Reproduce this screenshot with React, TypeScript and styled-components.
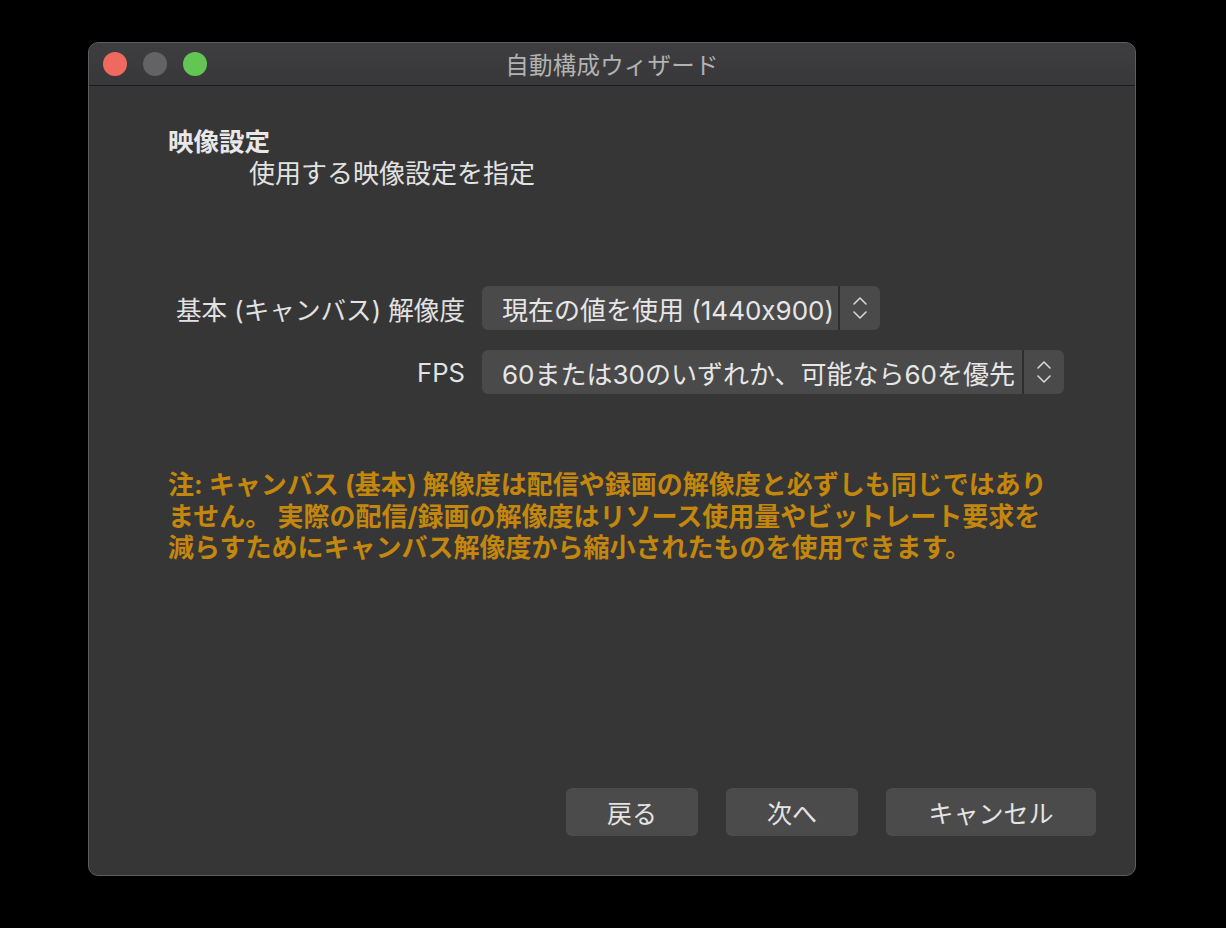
import React from "react";
import styled, { createGlobalStyle } from "styled-components";

const GlobalStyle = createGlobalStyle`
  html, body { margin: 0; padding: 0; background: #000; }
  body { font-family: Inter, "Noto Sans CJK JP", sans-serif; }
`;

const Page = styled.div`
  width: 1226px;
  height: 928px;
  box-sizing: border-box;
  padding: 42px 0 0 88px;
  background: #000;
  overflow: hidden;
`;

const Window = styled.div`
  width: 1048px;
  height: 834px;
  box-sizing: border-box;
  border: 1px solid #5d5d5f;
  border-radius: 10px;
  background: #363636;
  display: flex;
  flex-direction: column;
  overflow: hidden;
`;

const TitleBar = styled.div`
  height: 42px;
  flex: none;
  display: grid;
  grid-template-columns: 1fr auto 1fr;
  align-items: center;
  background: linear-gradient(#3e3e40, #38383a);
  border-bottom: 1px solid #1b1b1b;
`;

const Lights = styled.div`
  display: flex;
  gap: 16px;
  padding-left: 14px;
`;

const Light = styled.span<{ $color: string }>`
  width: 24px;
  height: 24px;
  border-radius: 50%;
  background: ${(p) => p.$color};
`;

const Title = styled.div`
  font-family: "Noto Sans CJK JP", sans-serif;
  font-size: 23.5px;
  color: #b2b2b2;
  letter-spacing: 0.2px;
`;

const Body = styled.div`
  flex: 1;
  display: flex;
  flex-direction: column;
  padding: 38px 39px 39px 79px;
  color: #dedede;
`;

const Heading = styled.div`
  font-family: "Noto Sans CJK JP", sans-serif;
  font-size: 25.5px;
  font-weight: 700;
  line-height: 32px;
  color: #e8e8e8;
`;

const SubHeading = styled.div`
  font-family: "Noto Sans CJK JP", sans-serif;
  font-size: 26px;
  line-height: 32px;
  padding-left: 81px;
  color: #e2e2e2;
`;

const Form = styled.div`
  margin-top: 98px;
  display: grid;
  grid-template-columns: 297px auto;
  column-gap: 17px;
  row-gap: 20px;
  align-items: center;
  justify-content: start;
`;

const Label = styled.div`
  text-align: right;
  font-family: Inter, "Noto Sans CJK JP", sans-serif;
  font-size: 25.6px;
  color: #e2e2e2;
  white-space: nowrap;
`;

const Select = styled.div<{ $width: number }>`
  width: ${(p) => p.$width}px;
  height: 44px;
  display: flex;
  border-radius: 6px;
  background: #4a4a4a;
  overflow: hidden;
`;

const SelectValue = styled.div`
  flex: 1;
  display: flex;
  align-items: center;
  padding-left: 20px;
  font-family: Inter, "Noto Sans CJK JP", sans-serif;
  font-size: 26px;
  color: #e6e6e6;
  white-space: nowrap;
  overflow: hidden;
  border-right: 2px solid #2e2e2e;
`;

const SelectArrow = styled.div`
  width: 40px;
  flex: none;
  display: flex;
  align-items: center;
  justify-content: center;
`;

const Note = styled.div`
  margin-top: 75px;
  font-family: Inter, "Noto Sans CJK JP", sans-serif;
  font-size: 26px;
  font-weight: 700;
  line-height: 31.5px;
  color: #c4870d;
  white-space: nowrap;
`;

const Buttons = styled.div`
  margin-top: auto;
  display: flex;
  justify-content: flex-end;
  gap: 28px;
`;

const Button = styled.button<{ $width: number }>`
  width: ${(p) => p.$width}px;
  height: 48px;
  border: none;
  border-radius: 6px;
  background: #4b4b4b;
  color: #e4e4e4;
  font-family: "Noto Sans CJK JP", sans-serif;
  font-size: 25px;
  padding: 0;
  cursor: default;
`;

const Chevrons = () => (
  <svg width="16" height="26" viewBox="0 0 16 26" fill="none">
    <path d="M2 9 L8 3 L14 9" stroke="#d6d6d6" strokeWidth="1.6" strokeLinecap="round" strokeLinejoin="round" />
    <path d="M2 17 L8 23 L14 17" stroke="#d6d6d6" strokeWidth="1.6" strokeLinecap="round" strokeLinejoin="round" />
  </svg>
);

export default function App() {
  return (
    <>
      <GlobalStyle />
      <Page>
        <Window>
          <TitleBar>
            <Lights>
              <Light $color="#ee6a5f" />
              <Light $color="#636366" />
              <Light $color="#62c554" />
            </Lights>
            <Title>自動構成ウィザード</Title>
            <div />
          </TitleBar>
          <Body>
            <Heading>映像設定</Heading>
            <SubHeading>使用する映像設定を指定</SubHeading>
            <Form>
              <Label>基本 (キャンバス) 解像度</Label>
              <Select $width={398}>
                <SelectValue>現在の値を使用 (1440x900)</SelectValue>
                <SelectArrow>
                  <Chevrons />
                </SelectArrow>
              </Select>
              <Label>FPS</Label>
              <Select $width={582}>
                <SelectValue>60または30のいずれか、可能なら60を優先</SelectValue>
                <SelectArrow>
                  <Chevrons />
                </SelectArrow>
              </Select>
            </Form>
            <Note>
              注: キャンバス (基本) 解像度は配信や録画の解像度と必ずしも同じではあり
              <br />
              ません。 実際の配信/録画の解像度はリソース使用量やビットレート要求を
              <br />
              減らすためにキャンバス解像度から縮小されたものを使用できます。
            </Note>
            <Buttons>
              <Button $width={132}>戻る</Button>
              <Button $width={132}>次へ</Button>
              <Button $width={210}>キャンセル</Button>
            </Buttons>
          </Body>
        </Window>
      </Page>
    </>
  );
}
